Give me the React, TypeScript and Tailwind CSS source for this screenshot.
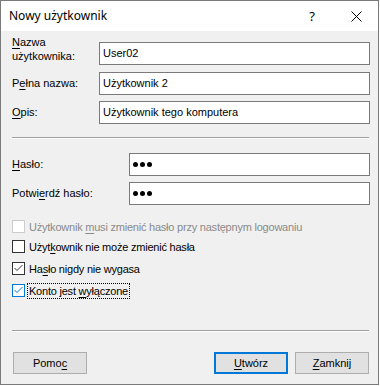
import React from "react";

type CheckState = "disabled" | "off" | "on" | "focus";

// podkreślenie klawisza skrótu (mnemonic)
function Mn({ children }: { children: React.ReactNode }) {
  return <span className="underline underline-offset-[2px] decoration-1">{children}</span>;
}

function Check({ state }: { state: CheckState }) {
  const border =
    state === "disabled"
      ? "border-[#cccccc]"
      : state === "focus"
      ? "border-[#0078d7]"
      : "border-[#333333]";
  const stroke = state === "focus" ? "#0078d7" : "#333333";
  return (
    <span className={`w-[13px] h-[13px] border bg-white flex items-center justify-center shrink-0 ${border}`}>
      {(state === "on" || state === "focus") && (
        <svg width="11" height="11" viewBox="0 0 11 11">
          <path d="M1.5 5 L4 7.5 L9.5 2" stroke={stroke} strokeWidth="1" fill="none" />
        </svg>
      )}
    </span>
  );
}

function CheckRow({
  state,
  className,
  children,
}: {
  state: CheckState;
  className: string;
  children: React.ReactNode;
}) {
  return (
    <div className={`flex items-center h-[13px] tracking-[-0.22px] ${className}`}>
      <Check state={state} />
      {state === "focus" ? (
        <span className="ml-[2px] border border-dotted border-black px-px leading-[14px] text-black">
          {children}
        </span>
      ) : (
        <span
          className={`ml-[4px] leading-[14px] ${state === "disabled" ? "text-[#8a8a8a]" : "text-black"}`}
        >
          {children}
        </span>
      )}
    </div>
  );
}

function TextBox({ value }: { value: string }) {
  return (
    <div className="flex-1 h-[23px] border border-[#7a7a7a] bg-white flex items-center pl-[3px] text-black">
      {value}
    </div>
  );
}

function PasswordBox() {
  return (
    <div className="flex-1 h-[23px] border border-[#7a7a7a] bg-white flex items-center gap-[2px] pl-[3px]">
      <span className="w-[5px] h-[5px] rounded-full bg-black" />
      <span className="w-[5px] h-[5px] rounded-full bg-black" />
      <span className="w-[5px] h-[5px] rounded-full bg-black" />
    </div>
  );
}

function Separator({ className }: { className: string }) {
  return (
    <div className={`mr-px ${className}`}>
      <div className="h-px bg-[#a0a0a0]" />
      <div className="h-px bg-white" />
    </div>
  );
}

export default function App() {
  return (
    <div className="w-[380px] h-[386px] bg-white">
      <div className="w-[379px] h-[385px] border border-[#7a7a7a] flex flex-col">
        {/* pasek tytułu */}
        <div className="h-[30px] bg-white flex items-center shrink-0 font-['Noto_Sans','Open_Sans',sans-serif] text-[12px] text-black">
          <span className="ml-[8px]">Nowy użytkownik</span>
          <span className="ml-auto text-[13px] leading-none">?</span>
          <span className="ml-[36px] mr-[16px] flex items-center">
            <svg width="11" height="11" viewBox="0 0 11 11">
              <path d="M0.5 0.5 L10.5 10.5 M10.5 0.5 L0.5 10.5" stroke="#000" strokeWidth="1" />
            </svg>
          </span>
        </div>

        {/* treść okna */}
        <div className="flex-1 bg-[#f0f0f0] pl-[11px] pr-[8px] pt-[4px] font-['Liberation_Sans',Arial,sans-serif] text-[11px] text-black">
          <div className="flex items-start">
            <div className="w-[87px] leading-[14px]">
              <Mn>N</Mn>azwa
              <br />
              użytkownika:
            </div>
            <div className="flex-1 flex mt-[7px]">
              <TextBox value="User02" />
            </div>
          </div>

          <div className="flex items-center mt-[7px]">
            <div className="w-[87px]">
              P<Mn>e</Mn>łna nazwa:
            </div>
            <TextBox value="Użytkownik 2" />
          </div>

          <div className="flex items-center mt-[6px]">
            <div className="w-[87px]">
              <Mn>O</Mn>pis:
            </div>
            <TextBox value="Użytkownik tego komputera" />
          </div>

          <Separator className="mt-[13px]" />

          <div className="flex items-center mt-[14px]">
            <div className="w-[117px]">
              <Mn>H</Mn>asło:
            </div>
            <PasswordBox />
          </div>

          <div className="flex items-center mt-[6px]">
            <div className="w-[117px]">
              Potwi<Mn>e</Mn>rdź hasło:
            </div>
            <PasswordBox />
          </div>

          <CheckRow state="disabled" className="mt-[15px]">
            Użytkownik <Mn>m</Mn>usi zmienić hasło przy następnym logowaniu
          </CheckRow>
          <CheckRow state="off" className="mt-[7px]">
            Użyt<Mn>k</Mn>ownik nie może zmienić hasła
          </CheckRow>
          <CheckRow state="on" className="mt-[9px]">
            Ha<Mn>s</Mn>ło nigdy nie wygasa
          </CheckRow>
          <CheckRow state="focus" className="mt-[9px]">
            Konto jest <Mn>w</Mn>yłączone
          </CheckRow>

          <Separator className="mt-[33px]" />

          <div className="flex items-center mt-[20px] ml-px mr-px">
            <button className="w-[74px] h-[22px] bg-[#e1e1e1] border border-[#adadad] text-black">
              Pomo<Mn>c</Mn>
            </button>
            <button className="ml-auto w-[74px] h-[22px] bg-[#e1e1e1] border-2 border-[#0078d7] text-black">
              <Mn>U</Mn>twórz
            </button>
            <button className="ml-[7px] w-[74px] h-[22px] bg-[#e1e1e1] border border-[#adadad] text-black">
              <Mn>Z</Mn>amknij
            </button>
          </div>
        </div>
      </div>
    </div>
  );
}
